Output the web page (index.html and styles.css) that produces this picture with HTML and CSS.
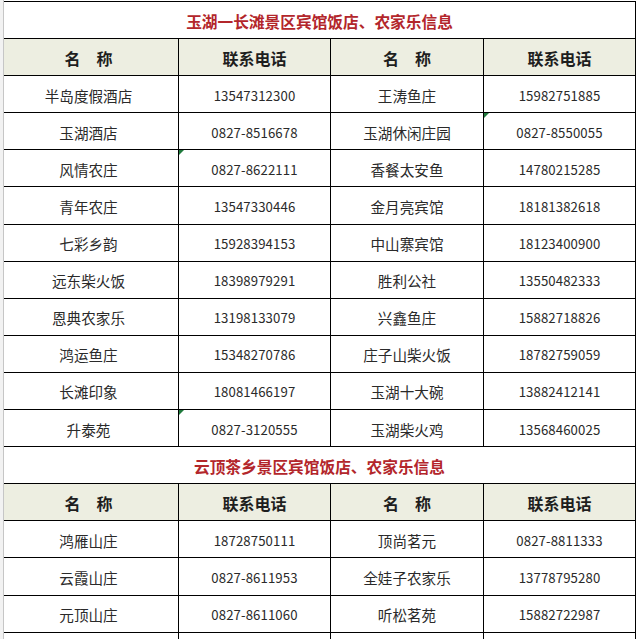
FILE: index.html
```html
<!DOCTYPE html>
<html lang="zh-CN">
<head>
<meta charset="utf-8">
<title>玉湖一长滩景区宾馆饭店、农家乐信息</title>
<link rel="stylesheet" href="styles.css">
</head>
<body>
<div class="page">
  <div class="gutter"></div>
  <div class="sheet">
    <div class="title">玉湖一长滩景区宾馆饭店、农家乐信息</div>
    <div class="hd l">名　称</div><div class="hd">联系电话</div><div class="hd">名　称</div><div class="hd">联系电话</div>

    <div class="c name l">半岛度假酒店</div><div class="c num">13547312300</div><div class="c name">王涛鱼庄</div><div class="c num">15982751885</div>
    <div class="c name l">玉湖酒店</div><div class="c num">0827-8516678</div><div class="c name">玉湖休闲庄园</div><div class="c num mark">0827-8550055</div>
    <div class="c name l">风情农庄</div><div class="c num mark">0827-8622111</div><div class="c name">香餐太安鱼</div><div class="c num">14780215285</div>
    <div class="c name l">青年农庄</div><div class="c num">13547330446</div><div class="c name">金月亮宾馆</div><div class="c num">18181382618</div>
    <div class="c name l">七彩乡韵</div><div class="c num">15928394153</div><div class="c name">中山寨宾馆</div><div class="c num">18123400900</div>
    <div class="c name l">远东柴火饭</div><div class="c num">18398979291</div><div class="c name">胜利公社</div><div class="c num">13550482333</div>
    <div class="c name l">恩典农家乐</div><div class="c num">13198133079</div><div class="c name">兴鑫鱼庄</div><div class="c num">15882718826</div>
    <div class="c name l">鸿运鱼庄</div><div class="c num">15348270786</div><div class="c name">庄子山柴火饭</div><div class="c num">18782759059</div>
    <div class="c name l">长滩印象</div><div class="c num">18081466197</div><div class="c name">玉湖十大碗</div><div class="c num">13882412141</div>
    <div class="c name l">升泰苑</div><div class="c num mark">0827-3120555</div><div class="c name">玉湖柴火鸡</div><div class="c num">13568460025</div>

    <div class="title">云顶茶乡景区宾馆饭店、农家乐信息</div>
    <div class="hd l">名　称</div><div class="hd">联系电话</div><div class="hd">名　称</div><div class="hd">联系电话</div>

    <div class="c name l">鸿雁山庄</div><div class="c num">18728750111</div><div class="c name">顶尚茗元</div><div class="c num">0827-8811333</div>
    <div class="c name l">云霞山庄</div><div class="c num">0827-8611953</div><div class="c name">全娃子农家乐</div><div class="c num">13778795280</div>
    <div class="c name l">元顶山庄</div><div class="c num">0827-8611060</div><div class="c name">听松茗苑</div><div class="c num">15882722987</div>

    <div class="c l"></div><div class="c"></div><div class="c"></div><div class="c"></div>
  </div>
</div>
</body>
</html>
```

FILE: styles.css
```css
html, body {
  margin: 0;
  padding: 0;
  background: #ffffff;
}

body {
  font-family: "Noto Sans CJK SC", "Noto Sans", sans-serif;
  color: #2a2a2a;
  overflow: hidden;
  height: 639px;
}

.page {
  display: flex;
  align-items: flex-start;
}

.gutter {
  width: 3px;
  height: 639px;
  background: #f2f2f2;
  border-right: 1px solid #c6c6c6;
  flex: none;
}

.sheet {
  margin-top: 1px;
  display: grid;
  grid-template-columns: 175px 152px 153px 152px;
  grid-auto-rows: 37.1px;
  border-top: 1px solid #000;
}

.sheet > div {
  box-sizing: border-box;
  border-right: 1px solid #000;
  border-bottom: 1px solid #000;
  display: flex;
  align-items: center;
  justify-content: center;
  padding-top: 2px;
  white-space: nowrap;
}

.sheet > .l {
  padding-right: 5px;
}

.sheet > .title {
  grid-column: 1 / -1;
  color: #b3262b;
  font-weight: 700;
  font-size: 15.7px;
  padding-top: 3px;
}

.sheet > .hd {
  background: #edeee1;
  font-weight: 700;
  font-size: 16px;
  color: #1e1e1e;
}

.name {
  font-size: 14.6px;
}

.num {
  font-size: 13.2px;
  letter-spacing: 0.1px;
}

.mark {
  position: relative;
}

.mark::before {
  content: "";
  position: absolute;
  left: 0;
  top: 0;
  width: 0;
  height: 0;
  border-top: 5px solid #1f7a3c;
  border-right: 5px solid transparent;
}
```
